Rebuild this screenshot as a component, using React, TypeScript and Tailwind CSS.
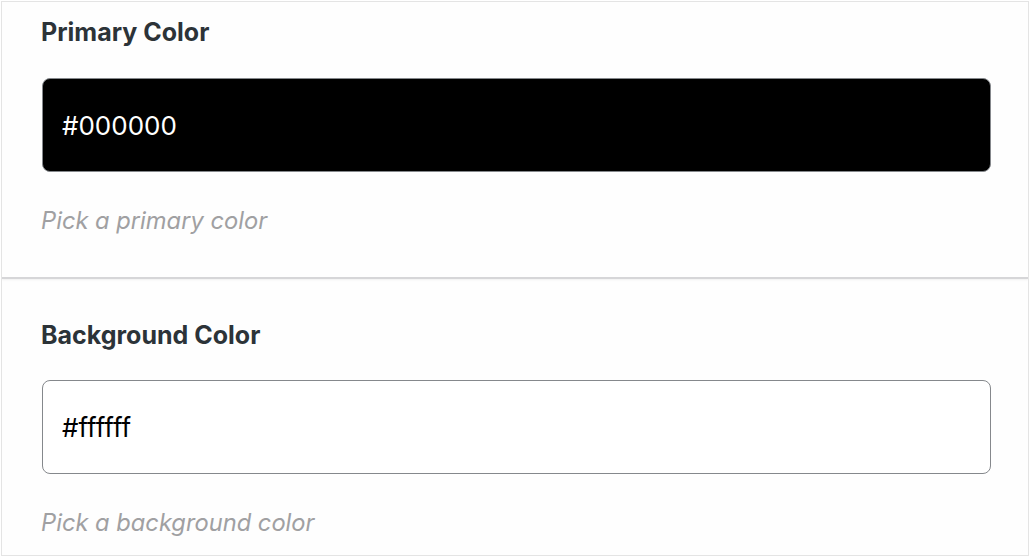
import React from "react";

interface ColorField {
  label: string;
  value: string;
  help: string;
  dark: boolean;
}

const fields: ColorField[] = [
  { label: "Primary Color", value: "#000000", help: "Pick a primary color", dark: true },
  { label: "Background Color", value: "#ffffff", help: "Pick a background color", dark: false },
];

function Field({ field, first }: { field: ColorField; first: boolean }) {
  return (
    <div
      className={
        first
          ? "pt-[14px] pb-[40px] px-[39px] border-b-2 border-[#d6d6d8] shadow-[0_1px_2px_rgba(0,0,0,0.06)]"
          : "pt-[40px] pb-[16px] px-[39px]"
      }
    >
      <label className="block text-[25px] leading-[32px] font-bold text-[#2c3338]">
        {field.label}
      </label>
      <input
        type="text"
        readOnly
        value={field.value}
        className={
          field.dark
            ? "block mt-[30px] ml-[1px] w-[949px] h-[94px] rounded-[8px] border-[1.5px] border-[#85888c] bg-black text-white px-[19px] text-[26px] outline-none"
            : "block mt-[29px] ml-[1px] w-[949px] h-[94px] rounded-[8px] border-[1.5px] border-[#85888c] bg-white text-black px-[19px] text-[26px] outline-none"
        }
      />
      <p className="mt-[33px] text-[23.7px] leading-[32px] italic text-[#a0a0a2]">
        {field.help}
      </p>
    </div>
  );
}

export default function App() {
  return (
    <div
      className="w-[1030px] h-[557px] bg-white pt-[1px] pl-[1px] overflow-hidden"
      style={{ fontFamily: "Inter, 'Noto Sans', sans-serif" }}
    >
      <div className="w-[1028px] h-[555px] border border-[#e4e4e4] bg-[#fefefe] overflow-hidden">
        {fields.map((f, i) => (
          <Field key={f.label} field={f} first={i === 0} />
        ))}
      </div>
    </div>
  );
}
